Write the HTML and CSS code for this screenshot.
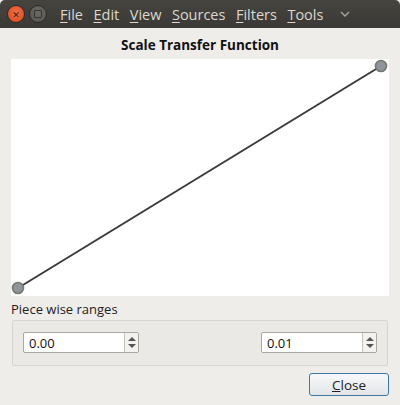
FILE: index.html
```html
<!DOCTYPE html>
<html lang="en">
<head>
    <meta charset="UTF-8">
    <title>Scale Transfer Function</title>
    <link rel="stylesheet" href="styles.css">
</head>
<body>
    <div class="titlebar">
        <div class="win-btns">
            <span class="win-btn close">&#x2715;</span>
            <span class="win-btn min"><i></i></span>
        </div>
        <div class="menu">
            <span><u>F</u>ile</span>
            <span><u>E</u>dit</span>
            <span><u>V</u>iew</span>
            <span><u>S</u>ources</span>
            <span><u>F</u>ilters</span>
            <span><u>T</u>ools</span>
            <svg class="chev" width="10" height="8" viewBox="0 0 10 8"><path d="M1 2 L5 6 L9 2" fill="none" stroke="#a8a69f" stroke-width="1.3"/></svg>
        </div>
    </div>

    <div class="main">
        <h1 class="title">Scale Transfer Function</h1>
        <div class="canvas">
            <svg width="378" height="237" viewBox="0 0 378 237">
                <line x1="7" y1="229" x2="370" y2="7" stroke="#3b3b3b" stroke-width="2"/>
                <circle cx="7" cy="229" r="5.5" fill="#8f9598" stroke="#727a72" stroke-width="1.6"/>
                <circle cx="370" cy="7" r="5.5" fill="#8f9598" stroke="#727a72" stroke-width="1.6"/>
            </svg>
        </div>
        <div class="label">Piece wise ranges</div>
        <div class="group">
            <div class="spin">
                <span class="value">0.00</span>
                <span class="arrows"><b class="up"></b><b class="down"></b></span>
            </div>
            <div class="spin">
                <span class="value">0.01</span>
                <span class="arrows"><b class="up"></b><b class="down"></b></span>
            </div>
        </div>
        <div class="actions">
            <button class="btn"><u>C</u>lose</button>
        </div>
    </div>
</body>
</html>
```

FILE: styles.css
```css
body {
    margin: 0;
    width: 400px;
    height: 405px;
    background: #efedea;
    font-family: "Open Sans", "DejaVu Sans", sans-serif;
    color: #222;
    overflow: hidden;
}
.titlebar {
    height: 28px;
    display: flex;
    align-items: center;
    background: linear-gradient(#45443f, #3a3935);
    border-radius: 5px 5px 0 0;
    padding-left: 7px;
}
.win-btns {
    display: flex;
    gap: 4px;
}
.win-btn {
    width: 16px;
    height: 16px;
    border-radius: 50%;
    display: flex;
    align-items: center;
    justify-content: center;
}
.close {
    background: radial-gradient(circle at 50% 40%, #f06d45, #d9491c);
    border: 1px solid #2c2b28;
    color: #3b2018;
    font-size: 9px;
    font-weight: bold;
}
.min {
    background: radial-gradient(circle at 50% 40%, #6a6964, #55544f);
    border: 1px solid #2c2b28;
}
.min i {
    width: 6px;
    height: 6px;
    border: 1.5px solid #34332f;
    border-radius: 1px;
}
.menu {
    display: flex;
    align-items: center;
    margin-left: 13px;
    gap: 10.5px;
    color: #dcd8cf;
    font-size: 14.5px;
}
.menu u {
    text-decoration-thickness: 1px;
    text-underline-offset: 2px;
}
.chev {
    margin-left: 6px;
}
.main {
    padding: 0 11px;
}
.title {
    margin: 0;
    height: 31px;
    line-height: 34px;
    text-align: center;
    font-size: 13.5px;
    font-weight: bold;
    color: #111;
}
.canvas {
    height: 237px;
    background: #fff;
}
.canvas svg {
    display: block;
}
.label {
    font-size: 13px;
    margin-top: 4px;
    height: 20px;
}
.group {
    margin: 0 1px 0 1px;
    height: 44px;
    border: 1px solid #d8d5d0;
    border-radius: 2px;
    background: #ebe9e6;
    display: flex;
    justify-content: space-between;
    align-items: flex-start;
    padding: 11px 10px 0;
    box-sizing: border-box;
    height: 46px;
}
.spin {
    width: 114px;
    height: 19px;
    border: 1px solid #aaa7a1;
    border-radius: 2px;
    background: #fff;
    display: flex;
    align-items: center;
    font-size: 13px;
}
.spin .value {
    flex: 1;
    padding-left: 5px;
    color: #111;
}
.arrows {
    width: 13px;
    height: 19px;
    border-left: 1px solid #c6c3bd;
    background: #f3f2f0;
    display: flex;
    flex-direction: column;
    align-items: center;
    justify-content: center;
    gap: 3px;
}
.up, .down {
    width: 0;
    height: 0;
    border-left: 4px solid transparent;
    border-right: 4px solid transparent;
}
.up {
    border-bottom: 4px solid #555;
}
.down {
    border-top: 4px solid #555;
}
.actions {
    display: flex;
    justify-content: flex-end;
    margin-top: 7px;
}
.btn {
    width: 80px;
    height: 23px;
    border: 1px solid #3d79a8;
    border-radius: 3px;
    background: linear-gradient(#f7f8f9, #e3e6e9);
    font-family: inherit;
    font-size: 13.5px;
    color: #222;
    padding: 0;
}
```
